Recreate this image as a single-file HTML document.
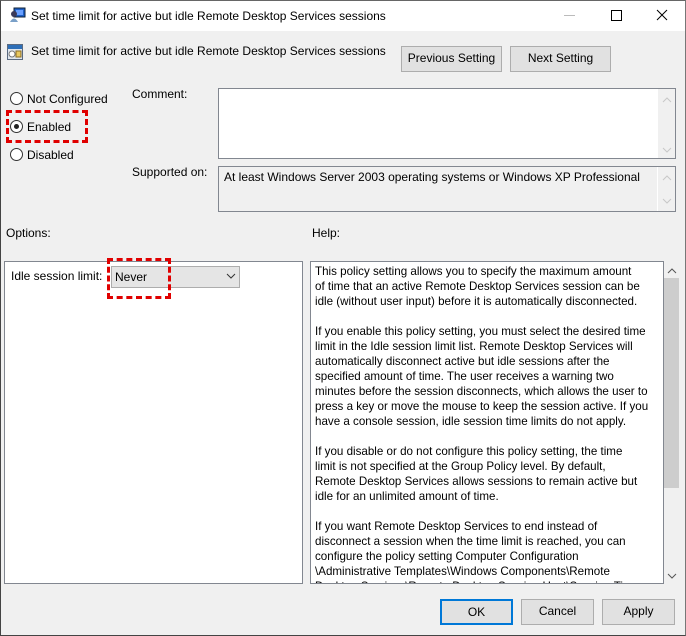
<!DOCTYPE html>
<html><head><meta charset="utf-8"><style>
*{margin:0;padding:0;box-sizing:border-box}
body{width:686px;height:636px;overflow:hidden;background:#f0f0f0;font-family:"Liberation Sans",sans-serif;font-size:12px;color:#000;position:relative}
.a{position:absolute;white-space:nowrap}
.frame{position:absolute;left:0;top:0;width:686px;height:636px;border-left:1px solid #444;border-right:1px solid #777;border-bottom:1px solid #444;border-top:1px solid #666}
.btn{position:absolute;background:#e1e1e1;border:1px solid #adadad;text-align:center;line-height:23px}
.radio{position:absolute;width:13px;height:13px;border:1px solid #333;border-radius:50%;background:#fff}
.dash{position:absolute;border:3px dashed #e00000}
</style></head><body>
<div class="frame"></div>
<div class="a" style="left:1px;top:1px;width:684px;height:30px;background:#fff"></div>
<svg class="a" style="left:9px;top:7px" width="17" height="16" viewBox="0 0 17 16"><rect x="5" y="1" width="11" height="9" fill="#1d5fc7" stroke="#123"/><rect x="7" y="3" width="7" height="5" fill="#6aa0ff"/><circle cx="5" cy="7" r="3" fill="#3a3a5a"/><path d="M1 15 Q5 8 9 15Z" fill="#7aa0c8"/></svg>
<div class="a" style="left:31px;top:9px">Set time limit for active but idle Remote Desktop Services sessions</div>
<div class="a" style="left:564px;top:15px;width:11px;height:1px;background:#bbb"></div>
<div class="a" style="left:611px;top:10px;width:11px;height:11px;border:1px solid #000"></div>
<svg class="a" style="left:656px;top:9px" width="12" height="12"><path d="M1 1L11 11M11 1L1 11" stroke="#000" stroke-width="1"/></svg>

<svg class="a" style="left:7px;top:44px" width="16" height="16" viewBox="0 0 16 16"><rect x="0.5" y="0.5" width="15" height="15" fill="#dfe6ee" stroke="#5a6a80"/><rect x="1" y="1" width="14" height="4" fill="#2e6fb8"/><circle cx="5" cy="10" r="3" fill="#fff" stroke="#777"/><rect x="9" y="7" width="5" height="6" fill="#e8c860" stroke="#8a6a20"/></svg>
<div class="a" style="left:31px;top:44px">Set time limit for active but idle Remote Desktop Services sessions</div>
<div class="btn" style="left:401px;top:46px;width:101px;height:26px">Previous Setting</div>
<div class="btn" style="left:510px;top:46px;width:101px;height:26px">Next Setting</div>

<div class="radio" style="left:10px;top:92px"></div>
<div class="a" style="left:27px;top:92px">Not Configured</div>
<div class="radio" style="left:10px;top:120px"></div>
<div class="a" style="left:14px;top:124px;width:5px;height:5px;border-radius:50%;background:#222"></div>
<div class="a" style="left:27px;top:120px">Enabled</div>
<div class="radio" style="left:10px;top:148px"></div>
<div class="a" style="left:27px;top:148px">Disabled</div>
<div class="dash" style="left:6px;top:110px;width:82px;height:33px"></div>

<div class="a" style="left:132px;top:87px">Comment:</div>
<div class="a" style="left:218px;top:88px;width:458px;height:71px;background:#fff;border:1px solid #828790"></div>
<div class="a" style="left:658px;top:89px;width:17px;height:69px;background:#f0f0f0"></div>
<svg class="a" style="left:662px;top:97px" width="10" height="6"><path d="M1 5L5 1L9 5" stroke="#c8c8c8" fill="none"/></svg>
<svg class="a" style="left:662px;top:147px" width="10" height="6"><path d="M1 1L5 5L9 1" stroke="#c8c8c8" fill="none"/></svg>

<div class="a" style="left:132px;top:165px">Supported on:</div>
<div class="a" style="left:218px;top:166px;width:458px;height:46px;border:1px solid #828790"></div>
<div class="a" style="left:657px;top:167px;width:1px;height:44px;background:#fff"></div>
<div class="a" style="left:224px;top:170px">At least Windows Server 2003 operating systems or Windows XP Professional</div>
<svg class="a" style="left:662px;top:175px" width="10" height="6"><path d="M1 5L5 1L9 5" stroke="#c8c8c8" fill="none"/></svg>
<svg class="a" style="left:662px;top:198px" width="10" height="6"><path d="M1 1L5 5L9 1" stroke="#c8c8c8" fill="none"/></svg>

<div class="a" style="left:6px;top:226px">Options:</div>
<div class="a" style="left:312px;top:226px">Help:</div>

<div class="a" style="left:4px;top:261px;width:299px;height:323px;background:#fff;border:1px solid #828790"></div>
<div class="a" style="left:11px;top:269px">Idle session limit:</div>
<div class="a" style="left:111px;top:266px;width:129px;height:22px;background:#e5e5e5;border:1px solid #adadad"></div>
<div class="a" style="left:115px;top:270px">Never</div>
<svg class="a" style="left:226px;top:273px" width="10" height="6"><path d="M1 1L5 5L9 1" stroke="#333" fill="none"/></svg>
<div class="dash" style="left:107px;top:258px;width:64px;height:41px"></div>

<div class="a" style="left:310px;top:261px;width:354px;height:323px;background:#fff;border:1px solid #828790;overflow:hidden">
<div style="position:absolute;left:4px;top:2px;line-height:15px;font-size:11.6px;white-space:nowrap">This policy setting allows you to specify the maximum amount<br>of time that an active Remote Desktop Services session can be<br>idle (without user input) before it is automatically disconnected.<br><br>If you enable this policy setting, you must select the desired time<br>limit in the Idle session limit list. Remote Desktop Services will<br>automatically disconnect active but idle sessions after the<br>specified amount of time. The user receives a warning two<br>minutes before the session disconnects, which allows the user to<br>press a key or move the mouse to keep the session active. If you<br>have a console session, idle session time limits do not apply.<br><br>If you disable or do not configure this policy setting, the time<br>limit is not specified at the Group Policy level. By default,<br>Remote Desktop Services allows sessions to remain active but<br>idle for an unlimited amount of time.<br><br>If you want Remote Desktop Services to end instead of<br>disconnect a session when the time limit is reached, you can<br>configure the policy setting Computer Configuration<br>\Administrative Templates\Windows Components\Remote<br>Desktop Services\Remote Desktop Session Host\Session Time</div>
</div>
<div class="a" style="left:664px;top:261px;width:17px;height:323px;background:#f0f0f0"></div>
<div class="a" style="left:664px;top:278px;width:15px;height:210px;background:#cdcdcd"></div>
<svg class="a" style="left:667px;top:268px" width="10" height="6"><path d="M1 5L5 1L9 5" stroke="#555" fill="none"/></svg>
<svg class="a" style="left:667px;top:573px" width="10" height="6"><path d="M1 1L5 5L9 1" stroke="#555" fill="none"/></svg>

<div class="btn" style="left:440px;top:599px;width:73px;height:26px;border:2px solid #0078d7;line-height:22px">OK</div>
<div class="btn" style="left:521px;top:599px;width:73px;height:26px">Cancel</div>
<div class="btn" style="left:602px;top:599px;width:73px;height:26px">Apply</div>
</body></html>
